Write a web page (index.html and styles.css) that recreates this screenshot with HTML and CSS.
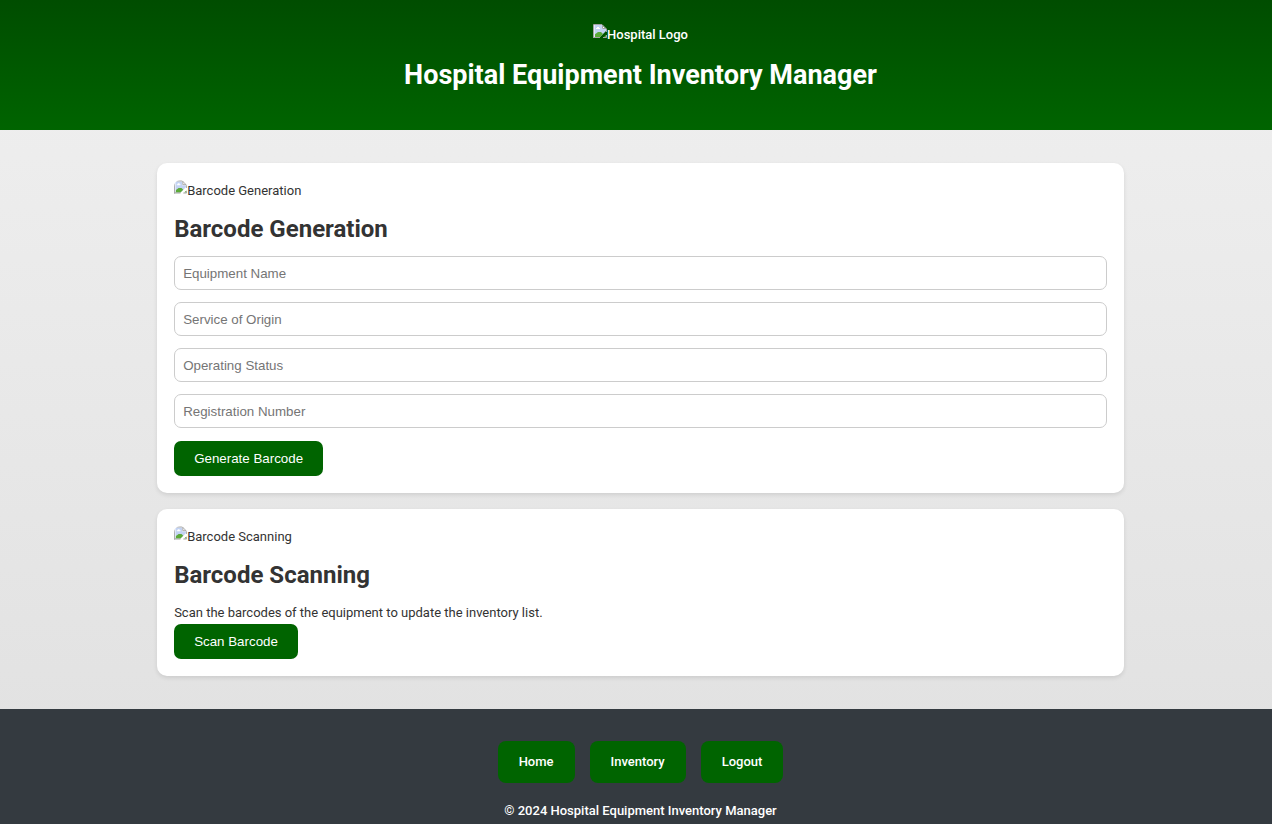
FILE: index.html
```html
<!DOCTYPE html>
<html lang="en">
<head>
<meta charset="utf-8">
<title>Hospital Equipment Inventory Manager</title>
<link rel="stylesheet" href="styles.css">
</head>
<body>
<svg class="defs" width="0" height="0" aria-hidden="true">
  <symbol id="picture" viewBox="0 0 14 14">
    <path fill="#c3d3f3" d="M1 1h8v4h4v2l-6 6H1z"/>
    <path fill="#fff" d="M9 1l4 4H9zM3 5V4h1V3h2v1h1v1z"/>
    <path fill="#5caa39" d="M1 13v-2l4-3h3l2 2-3 3z"/>
    <path fill="#e3eafa" d="M1 1h1v12H1z"/>
    <path fill="#5caa39" d="M11 13l2-2v2z"/>
    <path fill="none" stroke="#a3a3a3" d="M.5 14V.5H9L13.500 5v3M9.500 1v3.500H13M0 13.500h7M10 13.500h3.500V11"/>
  </symbol>
</svg>
<header class="header">
  <div class="picture"><svg class="picture-icon" aria-hidden="true"><use href="#picture"/></svg><span>Hospital Logo</span></div>
  <h1 class="title">Hospital Equipment Inventory Manager</h1>
</header>
<main class="main">
  <section class="card">
    <div class="picture"><svg class="picture-icon rounded" aria-hidden="true"><use href="#picture"/></svg><span>Barcode Generation</span></div>
    <h2 class="heading">Barcode Generation</h2>
    <form class="form">
      <input class="field" type="text" aria-label="Equipment Name" placeholder="Equipment Name">
      <input class="field" type="text" aria-label="Service of Origin" placeholder="Service of Origin">
      <input class="field" type="text" aria-label="Operating Status" placeholder="Operating Status">
      <input class="field" type="text" aria-label="Registration Number" placeholder="Registration Number">
      <button class="button" type="button">Generate Barcode</button>
    </form>
  </section>
  <section class="card">
    <div class="picture"><svg class="picture-icon rounded" aria-hidden="true"><use href="#picture"/></svg><span>Barcode Scanning</span></div>
    <h2 class="heading">Barcode Scanning</h2>
    <p class="text">Scan the barcodes of the equipment to update the inventory list.</p>
    <button class="button" type="button">Scan Barcode</button>
  </section>
</main>
<footer class="footer">
  <nav class="nav">
    <a class="nav-link" href="#home">Home</a>
    <a class="nav-link" href="#inventory">Inventory</a>
    <a class="nav-link" href="#logout">Logout</a>
  </nav>
  <p class="copyright">© 2024 Hospital Equipment Inventory Manager</p>
</footer>
</body>
</html>
```
FILE: styles.css
```css
* { box-sizing: border-box; }
body {
  margin: 0;
  min-height: 100vh;
  display: flex;
  flex-direction: column;
  font: 400 13px/22px Roboto, sans-serif;
  color: #333;
  background: linear-gradient(#f0f0f0, #e0e0e0);
}
.defs { position: absolute; }
.header {
  display: flex;
  flex-direction: column;
  align-items: center;
  gap: 11px;
  padding: 24px 12px 37px 21px;
  color: #fff;
  font-weight: 500;
  background: linear-gradient(#004d00, #006400);
}
.title { margin: 0; font-size: 27px; line-height: 36px; font-weight: 700; }
.picture { display: flex; align-items: flex-start; }
.picture-icon { width: 14px; height: 14px; flex: none; }
.rounded { width: 13px; border-radius: 7px 7px 0 0; }
.main {
  display: flex;
  flex-direction: column;
  gap: 16px;
  width: calc(76% + 9px);
  margin: 0 auto;
  padding: 33px 0 33px 9px;
}
.card {
  padding: 17px;
  border-radius: 10px;
  background: #fff;
  box-shadow: 0 2px 4px rgba(0, 0, 0, 0.1);
}
.heading { margin: 11px 0; font-size: 24px; line-height: 32px; font-weight: 700; }
.form { display: flex; flex-direction: column; align-items: flex-start; gap: 12px; }
.field,
.button {
  font-family: "Liberation Sans", Arial, sans-serif;
  border-radius: 7px;
}
.field {
  width: 100%;
  height: 34px;
  padding: 0 8px;
  border: 1px solid #ccc;
  color: #333;
}
.field::placeholder { color: #757575; }
.button {
  height: 35px;
  padding: 0 20px;
  border: 0;
  background: #006400;
  color: #fff;
}
.form .button { margin-top: 1px; }
.text { margin: 0; }
.footer {
  flex: 1;
  padding: 32px 12px 3px 21px;
  background: #343a40;
  color: #fff;
  font-weight: 500;
  text-align: center;
}
.nav { display: flex; justify-content: center; gap: 15px; }
.nav-link {
  padding: 10px 21px;
  border-radius: 8px;
  background: #006400;
  color: #fff;
  text-decoration: none;
}
.copyright { margin: 17px 0 0; }
```
